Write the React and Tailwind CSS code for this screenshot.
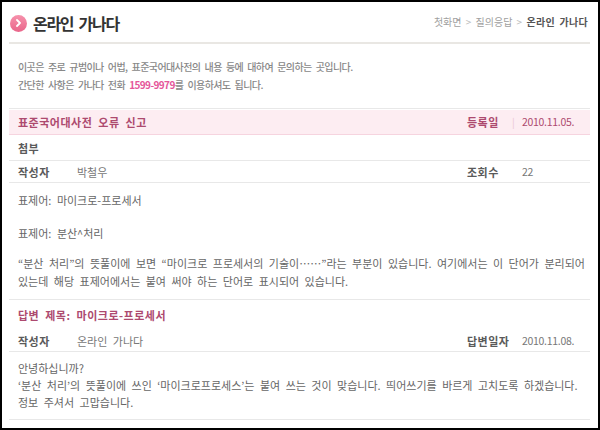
import React from 'react';

const font = { fontFamily: '"Noto Sans CJK KR", "Noto Sans", sans-serif' };

const InfoRow = ({ label, value, rightLabel, rightValue, className = '' }) => (
    <div className={`flex items-center border-b border-[#e8e8e8] ${className}`}>
        <div className="flex-1 flex items-center pl-[9px]">
            {label && <span className="w-[59px] font-bold text-[#5a5a5a] text-[11px] tracking-[0.5px]">{label}</span>}
            {value && <span className="text-[#777] text-[11px] tracking-[0px] [word-spacing:3px]">{value}</span>}
        </div>
        {rightLabel && (
            <div className="w-[123px] flex items-center">
                <span className="w-[55px] font-bold text-[#5a5a5a] text-[11px] tracking-[0.5px]">{rightLabel}</span>
                <span className="text-[#777] text-[10.5px] tracking-[-0.3px]">{rightValue}</span>
            </div>
        )}
    </div>
);

const App = () => {
    return (
        <div className="w-[600px] h-[430px] bg-white border-2 border-black overflow-hidden" style={font}>
            <div className="pl-[7px] pr-[8px] text-[10px] leading-[18px]">
                {/* Header */}
                <div className="h-[42px] flex items-center justify-between border-b-2 border-[#e9e7e3]">
                    <div className="flex items-center gap-[6px] pl-[1px] pt-[2px]">
                        <span className="w-[17px] h-[17px] rounded-full bg-gradient-to-b from-[#f691ac] to-[#e9658a] flex items-center justify-center">
                            <svg width="7" height="8" viewBox="0 0 7 8">
                                <path d="M2 1 L5 4 L2 7" stroke="white" strokeWidth="1.8" fill="none" strokeLinecap="round" strokeLinejoin="round" />
                            </svg>
                        </span>
                        <h1 className="text-[16px] font-bold text-[#333] tracking-[-1.3px] [word-spacing:3px]">온라인 가나다</h1>
                    </div>
                    <div className="text-[10px] text-[#a0a0a0] tracking-[0px] [word-spacing:2px] pr-[2px]">
                        첫화면 <span className="text-[#bbb]">&gt;</span> 질의응답 <span className="text-[#bbb]">&gt;</span>{' '}
                        <span className="font-bold text-[#555] tracking-[0.3px]">온라인 가나다</span>
                    </div>
                </div>

                {/* Intro */}
                <div className="h-[65px] pl-[9px] pt-[14px] text-[#888] font-medium tracking-[-0.6px] [word-spacing:2.5px] border-b border-[#e8e8e8]">
                    <p>이곳은 주로 규범이나 어법, 표준국어대사전의 내용 등에 대하여 문의하는 곳입니다.</p>
                    <p>간단한 사항은 가나다 전화 <span className="text-[#e5569a] font-bold">1599-9979</span>를 이용하셔도 됩니다.</p>
                </div>

                {/* Question title bar */}
                <div className="mt-[1px] h-[25px] flex items-center bg-[#fdedf2] border-b border-[#f6d4df]">
                    <div className="flex-1 pl-[9px] font-bold text-[#ad4a6f] text-[11px] tracking-[0.5px] [word-spacing:3px]">표준국어대사전 오류 신고</div>
                    <div className="w-[123px] flex items-center">
                        <span className="w-[45px] font-bold text-[#ad4a6f] text-[11px] tracking-[0.5px]">등록일</span>
                        <span className="w-[10px] text-[#ebc6d3]">|</span>
                        <span className="text-[#ad4a6f] text-[10.5px] tracking-[-0.3px]">2010.11.05.</span>
                    </div>
                </div>

                <InfoRow label="첨부" className="h-[26px]" />
                <InfoRow label="작성자" value="박철우" rightLabel="조회수" rightValue="22" className="h-[22px]" />

                {/* Question body */}
                <div className="pl-[9px] pt-[8px] pb-[9px] text-[#666] text-[11px] tracking-[0px] [word-spacing:3px] border-b border-[#e8e8e8] whitespace-nowrap">
                    <p>표제어: 마이크로-프로세서</p>
                    <p className="mt-[15px]">표제어: 분산^처리</p>
                    <p className="mt-[12px]">
                        “분산 처리”의 뜻풀이에 보면 “마이크로 프로세서의 기술이……”라는 부분이 있습니다. 여기에서는 이 단어가 분리되어
                        <br />
                        있는데 해당 표제어에서는 붙여 써야 하는 단어로 표시되어 있습니다.
                    </p>
                </div>

                {/* Answer */}
                <div className="h-[30px] flex items-center pl-[9px] font-bold text-[#ad4a6f] text-[11px] tracking-[0.5px] [word-spacing:3px]">
                    답변 제목: 마이크로-프로세서
                </div>
                <InfoRow label="작성자" value="온라인 가나다" rightLabel="답변일자" rightValue="2010.11.08." className="h-[22px]" />

                <div className="pl-[9px] pt-[8px] pb-[8px] text-[#666] text-[11px] leading-[17px] tracking-[0px] [word-spacing:3px] border-b border-[#e8e8e8] whitespace-nowrap">
                    <p>안녕하십니까?</p>
                    <p>‘분산 처리’의 뜻풀이에 쓰인 ‘마이크로프로세스’는 붙여 쓰는 것이 맞습니다. 띄어쓰기를 바르게 고치도록 하겠습니다.</p>
                    <p>정보 주셔서 고맙습니다.</p>
                </div>
            </div>
        </div>
    );
};

export default App;
